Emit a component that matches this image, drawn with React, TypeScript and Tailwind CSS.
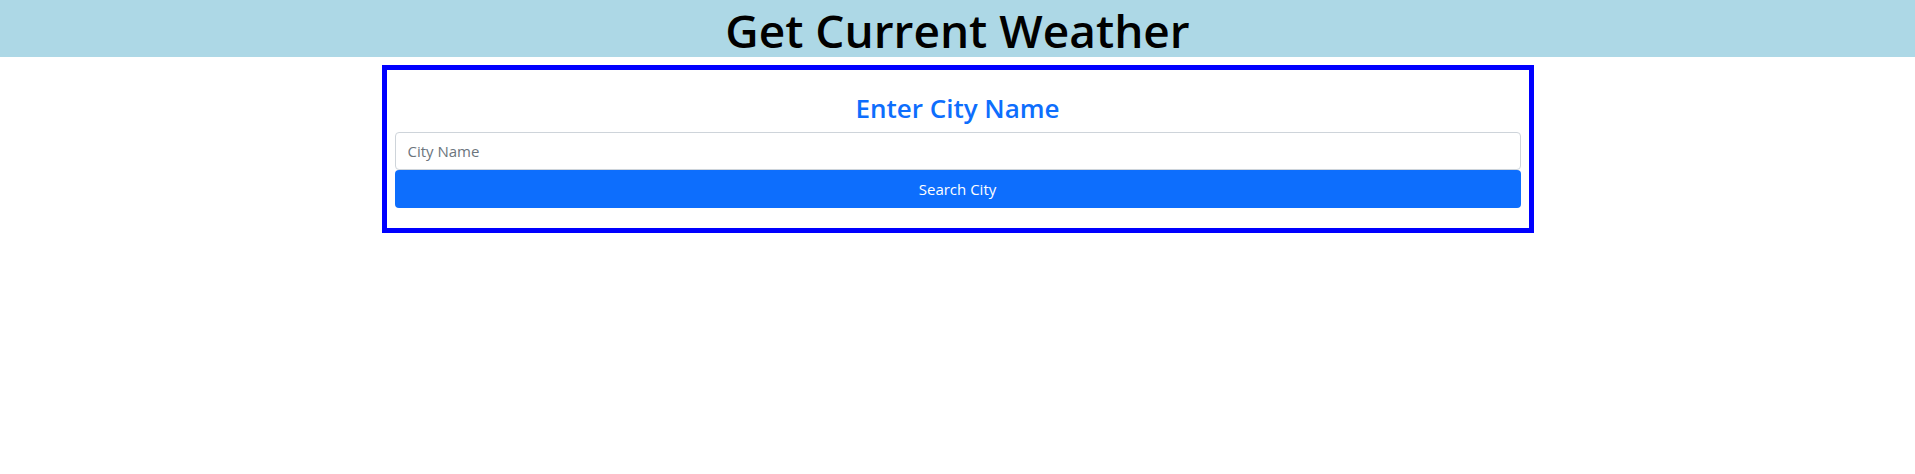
export default function App() {
  return (
    <div className="min-h-screen bg-white" style={{ fontFamily: '"Open Sans", "Noto Sans", sans-serif' }}>
      <header className="h-[57px] bg-[#add8e6] flex items-center justify-center">
        <h1 className="text-[46px] font-semibold leading-none text-black pt-[2px]">Get Current Weather</h1>
      </header>

      <div className="mt-2 mx-auto w-[1152px] border-[5px] border-[#0000ff] px-2 pt-[21px] pb-5">
        <h3 className="text-center text-[26px] font-semibold leading-[34px] text-[#0d6efd] mb-[7px]">
          Enter City Name
        </h3>
        <input
          type="text"
          placeholder="City Name"
          className="block w-full h-[38px] rounded-[4px] border border-[#ced4da] px-3 text-[15px] text-[#212529] placeholder:text-[#6c757d] outline-none"
        />
        <button className="block w-full h-[38px] rounded-[4px] bg-[#0d6efd] text-white text-[15px]">
          Search City
        </button>
      </div>
    </div>
  )
}
